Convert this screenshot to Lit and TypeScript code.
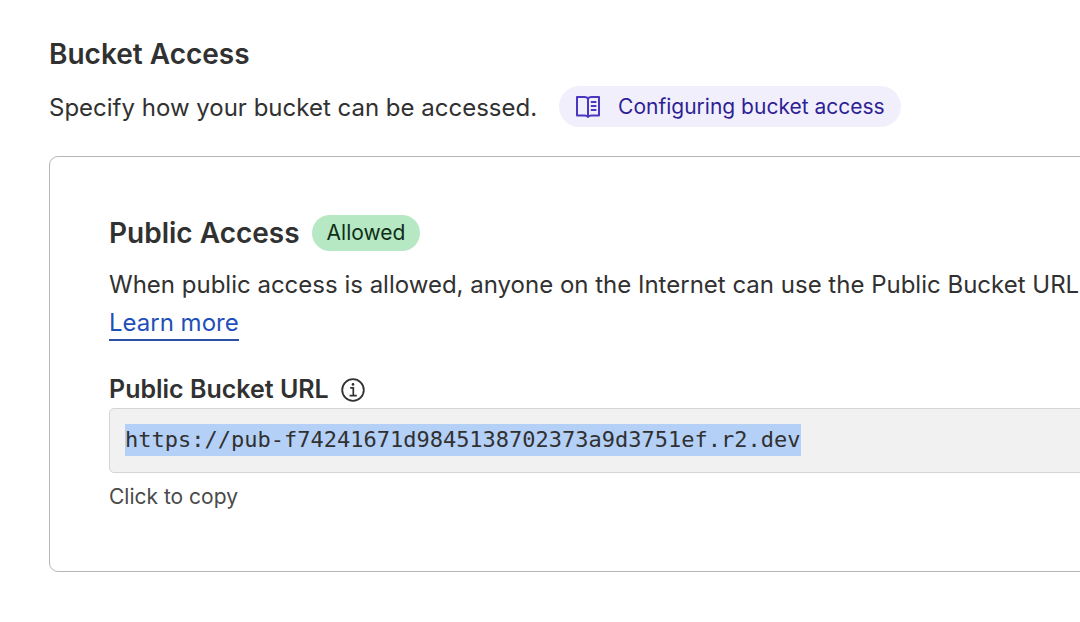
import { LitElement, html, css, svg } from "lit";
import { customElement, property, query } from "lit/decorators.js";

const bookIcon = svg`
  <svg class="book" viewBox="0 0 26 24" width="26" height="24" fill="none" stroke="currentColor" stroke-width="2" aria-hidden="true">
    <path d="M13 3.6C12.2 2.4 11 2 9.6 2H2v18.6h7.6c1.4 0 2.6.2 3.4 1.4.8-1.2 2-1.4 3.4-1.4H24V2h-7.6c-1.4 0-2.6.4-3.4 1.6v18.2" stroke-linejoin="round"/>
    <path d="M15.8 7h5.6M15.8 11h5.6M15.8 15h5.6"/>
  </svg>`;

const infoIcon = svg`
  <svg class="info" viewBox="0 0 24 24" width="24" height="24" fill="none" stroke="currentColor" aria-hidden="true">
    <circle cx="12" cy="12" r="10.8" stroke-width="1.8"/>
    <path d="M9.2 9.9h3.1v7.6M8.6 17.6h7.2" stroke-width="1.7"/>
    <circle cx="12" cy="6.4" r="1.3" fill="currentColor" stroke="none"/>
  </svg>`;

@customElement("bucket-url")
export class BucketUrl extends LitElement {
  @property() value = "";
  @query("input") private field!: HTMLInputElement;

  static styles = css`
    :host {
      display: block;
    }
    .label {
      display: flex;
      align-items: center;
      gap: 12px;
      font-size: 25px;
      font-weight: 600;
      line-height: 37px;
    }
    .info {
      display: block;
    }
    .box {
      display: flex;
      padding: 15px 15px 16px;
      border: 1px solid #d5d5d5;
      border-radius: 5px;
      background: #f1f1f1;
    }
    .field {
      field-sizing: content;
      box-sizing: border-box;
      min-width: 0;
      max-width: 100%;
      height: 32px;
      margin: 0;
      padding: 0;
      border: 0;
      outline: none;
      background: #b4d0f6;
      color: #313131;
      font: 22px/32px "DejaVu Sans Mono", monospace;
    }
    .field::selection {
      background: #b4d0f6;
      color: #313131;
    }
    .hint {
      margin: 0;
      padding-top: 8px;
      color: #4a4a4a;
      font-size: 21px;
      line-height: 32px;
    }
  `;

  private async copy() {
    this.field.select();
    await navigator.clipboard?.writeText(this.value);
  }

  render() {
    return html`
      <label class="label" for="url">Public Bucket URL ${infoIcon}</label>
      <div class="box" @click=${this.copy}>
        <input id="url" class="field" type="text" readonly aria-describedby="hint" .value=${this.value} />
      </div>
      <p id="hint" class="hint">Click to copy</p>
    `;
  }
}

@customElement("app-root")
export class AppRoot extends LitElement {
  static styles = css`
    :host {
      display: block;
      box-sizing: border-box;
      padding: 36px 0 50px 49px;
      overflow: hidden;
      background: #fff;
      color: #313131;
      font-family: Inter, "Liberation Sans", sans-serif;
      font-size: 24px;
      line-height: 38px;
    }
    h1,
    h2,
    p {
      margin: 0;
    }
    h1,
    h2 {
      font-size: 28px;
      font-weight: 600;
      line-height: 36px;
    }
    .intro {
      display: flex;
      align-items: end;
      gap: 22px;
      padding-top: 14px;
      white-space: nowrap;
    }
    .docs {
      display: flex;
      align-items: center;
      gap: 17px;
      padding: 0 16px;
      border-radius: 21px;
      background: #f1effc;
      color: #2e1f94;
      font-size: 21px;
      line-height: 41px;
      text-decoration: none;
    }
    .book {
      color: #4a37c0;
    }
    .card {
      margin: 29px -160px 0 0;
      padding: 58px 59px;
      border: 1px solid #b5b5b5;
      border-radius: 9px;
    }
    .title {
      display: flex;
      align-items: center;
      gap: 12px;
    }
    .badge {
      padding: 0 15px;
      border-radius: 18px;
      background: #b5e8c3;
      color: #0f2e18;
      font-size: 21px;
      line-height: 36px;
    }
    .about {
      padding-top: 15px;
      white-space: nowrap;
    }
    .more {
      display: inline-block;
      border-bottom: 2px solid #2c4fa8;
      color: #1f4fb8;
      line-height: 32px;
      text-decoration: none;
    }
    .url {
      padding-top: 29px;
    }
  `;

  render() {
    return html`
      <h1>Bucket Access</h1>
      <div class="intro">
        <p>Specify how your bucket can be accessed.</p>
        <a class="docs" href="#docs">${bookIcon}<span>Configuring bucket access</span></a>
      </div>
      <section class="card">
        <div class="title">
          <h2>Public Access</h2>
          <span class="badge">Allowed</span>
        </div>
        <p class="about">
          When public access is allowed, anyone on the Internet can use the Public Bucket URL<br />
          <a class="more" href="#public-access">Learn more</a>
        </p>
        <bucket-url class="url" value="https://pub-f74241671d9845138702373a9d3751ef.r2.dev"></bucket-url>
      </section>
    `;
  }
}
